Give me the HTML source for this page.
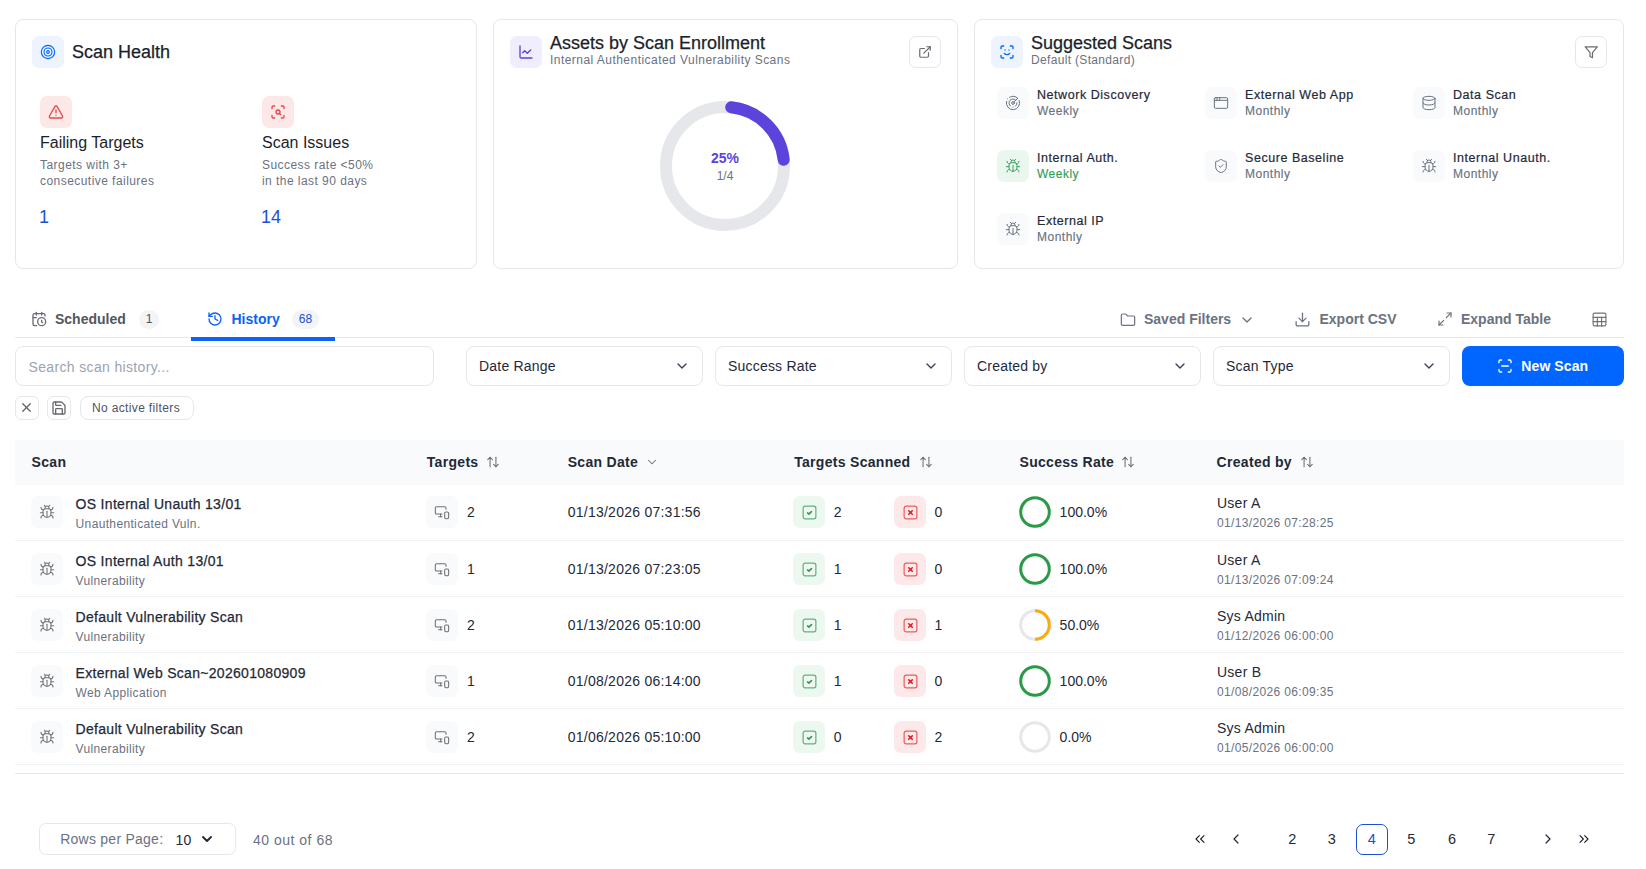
<!DOCTYPE html>
<html><head><meta charset="utf-8">
<style>
*{box-sizing:border-box;margin:0;padding:0}
html,body{width:1646px;height:869px;background:#fff;overflow:hidden}
body{font-family:"Liberation Sans",sans-serif;color:#1f2937;position:relative}
.abs{position:absolute}
svg{display:block}
.ic{fill:none;stroke:currentColor;stroke-width:2;stroke-linecap:round;stroke-linejoin:round}
.card{position:absolute;border:1px solid #e5e7eb;border-radius:8px;background:#fff}
.ibox{position:absolute;width:32px;height:32px;border-radius:7px;display:flex;align-items:center;justify-content:center}
.t18{font-size:18px;color:#1a1f2b;white-space:nowrap;-webkit-text-stroke:.25px currentColor}
.sub12{font-size:12px;color:#6b7280;white-space:nowrap}
.nw{white-space:nowrap}

.sg-n{font-size:12.5px;line-height:13px;color:#1f2937;letter-spacing:.55px;white-space:nowrap;-webkit-text-stroke:.2px currentColor}
.sg-f{font-size:12px;line-height:12px;letter-spacing:.5px;white-space:nowrap;-webkit-text-stroke:.15px currentColor}
.tab{font-size:14px;line-height:14px;font-weight:bold;white-space:nowrap}
.badge{position:absolute;height:19px;border-radius:10px;background:#f3f4f6;font-size:12px;line-height:19px;text-align:center}
.inp{position:absolute;top:346px;height:40px;border:1px solid #e5e7eb;border-radius:8px;background:#fff}
.dd{font-size:14px;line-height:14px;color:#1f2937;letter-spacing:.2px;white-space:nowrap}
.th{font-size:14px;line-height:14px;font-weight:bold;color:#1f2937;letter-spacing:.3px;white-space:nowrap}
.tn{font-size:14px;line-height:14px;color:#1f2937;letter-spacing:.25px;white-space:nowrap}
.ts{font-size:12px;line-height:12px;color:#6b7280;letter-spacing:.35px;white-space:nowrap}
.pg{font-size:14.5px;line-height:15px;color:#1f2937;white-space:nowrap}
</style></head><body>

<!-- Card 1: Scan Health -->
<div class="card" style="left:15px;top:19px;width:462px;height:250px"></div>
<div class="ibox" style="left:32px;top:36px;background:#edf4ff;color:#0066ff">
 <svg class="ic" width="16" height="16" viewBox="0 0 24 24" style="stroke-width:1.7"><circle cx="12" cy="12" r="10"/><circle cx="12" cy="12" r="6"/><circle cx="12" cy="12" r="2"/></svg>
</div>
<div class="abs t18" style="left:72px;top:42px">Scan Health</div>

<div class="ibox" style="left:40px;top:96px;background:#fde8e8;color:#e5484d">
 <svg class="ic" width="16" height="16" viewBox="0 0 24 24"><path d="m21.73 18-8-14a2 2 0 0 0-3.48 0l-8 14A2 2 0 0 0 4 21h16a2 2 0 0 0 1.73-3"/><path d="M12 9v4"/><path d="M12 17h.01"/></svg>
</div>
<div class="abs nw" style="left:40px;top:134px;font-size:16px;color:#1a1f2b">Failing Targets</div>
<div class="abs sub12" style="left:40px;top:157px;line-height:16px;letter-spacing:.45px">Targets with 3+<br>consecutive failures</div>
<div class="abs nw" style="left:39px;top:206.6px;font-size:18px;color:#1d4ed8">1</div>

<div class="ibox" style="left:262px;top:96px;background:#fde8e8;color:#e5484d">
 <svg class="ic" width="16" height="16" viewBox="0 0 24 24"><path d="M3 7V5a2 2 0 0 1 2-2h2"/><path d="M17 3h2a2 2 0 0 1 2 2v2"/><path d="M21 17v2a2 2 0 0 1-2 2h-2"/><path d="M7 21H5a2 2 0 0 1-2-2v-2"/><circle cx="12" cy="12" r="3"/><path d="m16 16-1.9-1.9"/></svg>
</div>
<div class="abs nw" style="left:262px;top:134px;font-size:16px;color:#1a1f2b">Scan Issues</div>
<div class="abs sub12" style="left:262px;top:157px;line-height:16px;letter-spacing:.45px">Success rate &lt;50%<br>in the last 90 days</div>
<div class="abs nw" style="left:261px;top:206.6px;font-size:18px;color:#1d4ed8">14</div>

<!-- Card 2: Assets -->
<div class="card" style="left:493px;top:19px;width:465px;height:250px"></div>
<div class="ibox" style="left:510px;top:36px;background:#f0edfe;color:#5b43dc">
 <svg class="ic" width="16" height="16" viewBox="0 0 24 24"><path d="M3 3v16a2 2 0 0 0 2 2h16"/><path d="m19 9-5 5-4-4-3 3"/></svg>
</div>
<div class="abs t18" style="left:550px;top:33px">Assets by Scan Enrollment</div>
<div class="abs sub12" style="left:550px;top:53px;letter-spacing:.46px">Internal Authenticated Vulnerability Scans</div>
<div class="abs" style="left:909px;top:36px;width:32px;height:32px;border:1px solid #e5e7eb;border-radius:7px;display:flex;align-items:center;justify-content:center;color:#6b6b72">
 <svg class="ic" width="14" height="14" viewBox="0 0 24 24" style="stroke-width:2.1"><path d="M15 3h6v6"/><path d="M10 14 21 3"/><path d="M18 13v6a2 2 0 0 1-2 2H5a2 2 0 0 1-2-2V8a2 2 0 0 1 2-2h6"/></svg>
</div>
<svg class="abs" style="left:660px;top:101px" width="130" height="130" viewBox="0 0 130 130">
 <circle cx="65" cy="65" r="59" fill="none" stroke="#e5e7eb" stroke-width="12"/>
 <path d="M71.2 6.3 A59 59 0 0 1 123.7 58.8" fill="none" stroke="#5b43dc" stroke-width="12" stroke-linecap="round"/>
</svg>
<div class="abs nw" style="left:675px;top:150px;width:100px;text-align:center;font-size:14px;font-weight:bold;color:#5b43dc">25%</div>
<div class="abs nw" style="left:675px;top:169px;width:100px;text-align:center;font-size:12px;color:#6b7280">1/4</div>

<!-- Card 3: Suggested -->
<div class="card" style="left:974px;top:19px;width:650px;height:250px"></div>
<div class="ibox" style="left:991px;top:36px;background:#edf4ff;color:#0066ff">
 <svg class="ic" width="16" height="16" viewBox="0 0 24 24"><path d="M3 7V5a2 2 0 0 1 2-2h2"/><path d="M17 3h2a2 2 0 0 1 2 2v2"/><path d="M21 17v2a2 2 0 0 1-2 2h-2"/><path d="M7 21H5a2 2 0 0 1-2-2v-2"/><path d="M8 14s1.5 2 4 2 4-2 4-2"/><path d="M9 9h.01"/><path d="M15 9h.01"/></svg>
</div>
<div class="abs t18" style="left:1031px;top:33px">Suggested Scans</div>
<div class="abs sub12" style="left:1031px;top:53px;letter-spacing:.33px">Default (Standard)</div>
<div class="abs" style="left:1575px;top:36px;width:32px;height:32px;border:1px solid #e5e7eb;border-radius:7px;display:flex;align-items:center;justify-content:center;color:#6b6b72">
 <svg class="ic" width="14.5" height="14.5" viewBox="0 0 24 24" style="stroke-width:2"><polygon points="22 3 2 3 10 12.46 10 19 14 21 14 12.46 22 3"/></svg>
</div>


<div class="ibox" style="left:997px;top:87px;background:#f8fafc;color:#6b7280"><svg class="ic" width="16" height="16" viewBox="0 0 24 24" style="stroke-width:1.5;"><path d="M19.07 4.93A10 10 0 0 0 6.99 3.34"/><path d="M4 6h.01"/><path d="M2.29 9.62A10 10 0 1 0 21.31 8.35"/><path d="M16.24 7.76A6 6 0 1 0 8.23 16.67"/><path d="M12 18h.01"/><path d="M17.99 11.66A6 6 0 0 1 15.77 16.67"/><circle cx="12" cy="12" r="2"/><path d="m13.41 10.59 5.66-5.66"/></svg></div>
<div class="abs sg-n" style="left:1037px;top:89px;">Network Discovery</div>
<div class="abs sg-f" style="left:1037px;top:105px;color:#6b7280">Weekly</div>
<div class="ibox" style="left:1205px;top:87px;background:#f8fafc;color:#6b7280"><svg class="ic" width="16" height="16" viewBox="0 0 24 24" style="stroke-width:1.5;"><rect x="2" y="4" width="20" height="16" rx="2"/><path d="M10 4v4"/><path d="M2 8h20"/><path d="M6 4v4"/></svg></div>
<div class="abs sg-n" style="left:1245px;top:89px;">External Web App</div>
<div class="abs sg-f" style="left:1245px;top:105px;color:#6b7280">Monthly</div>
<div class="ibox" style="left:1413px;top:87px;background:#f8fafc;color:#6b7280"><svg class="ic" width="16" height="16" viewBox="0 0 24 24" style="stroke-width:1.5;"><ellipse cx="12" cy="5" rx="9" ry="3"/><path d="M3 5V19A9 3 0 0 0 21 19V5"/><path d="M3 12A9 3 0 0 0 21 12"/></svg></div>
<div class="abs sg-n" style="left:1453px;top:89px;">Data Scan</div>
<div class="abs sg-f" style="left:1453px;top:105px;color:#6b7280">Monthly</div>
<div class="ibox" style="left:997px;top:150px;background:#eaf7ee;color:#3aa05a"><svg class="ic" width="16" height="16" viewBox="0 0 24 24" style="stroke-width:1.5;"><path d="m8 2 1.88 1.88"/><path d="M14.12 3.88 16 2"/><path d="M9 7.13v-1a3.003 3.003 0 1 1 6 0v1"/><path d="M12 20c-3.3 0-6-2.7-6-6v-3a4 4 0 0 1 4-4h4a4 4 0 0 1 4 4v3c0 3.3-2.7 6-6 6"/><path d="M12 20v-9"/><path d="M6.53 9C4.6 8.8 3 7.1 3 5"/><path d="M6 13H2"/><path d="M3 21c0-2.1 1.7-3.9 3.8-4"/><path d="M20.97 5c0 2.1-1.6 3.8-3.5 4"/><path d="M22 13h-4"/><path d="M17.2 17c2.1.1 3.8 1.9 3.8 4"/></svg></div>
<div class="abs sg-n" style="left:1037px;top:152px;">Internal Auth.</div>
<div class="abs sg-f" style="left:1037px;top:168px;color:#2f9e55">Weekly</div>
<div class="ibox" style="left:1205px;top:150px;background:#f8fafc;color:#6b7280"><svg class="ic" width="16" height="16" viewBox="0 0 24 24" style="stroke-width:1.5;"><path d="M20 13c0 5-3.5 7.5-7.66 8.95a1 1 0 0 1-.67-.01C7.5 20.5 4 18 4 13V6a1 1 0 0 1 1-1c2 0 4.5-1.2 6.24-2.72a1.17 1.17 0 0 1 1.52 0C14.51 3.81 17 5 19 5a1 1 0 0 1 1 1z"/><path d="m9 12 2 2 4-4"/></svg></div>
<div class="abs sg-n" style="left:1245px;top:152px;">Secure Baseline</div>
<div class="abs sg-f" style="left:1245px;top:168px;color:#6b7280">Monthly</div>
<div class="ibox" style="left:1413px;top:150px;background:#f8fafc;color:#6b7280"><svg class="ic" width="16" height="16" viewBox="0 0 24 24" style="stroke-width:1.5;"><path d="m8 2 1.88 1.88"/><path d="M14.12 3.88 16 2"/><path d="M9 7.13v-1a3.003 3.003 0 1 1 6 0v1"/><path d="M12 20c-3.3 0-6-2.7-6-6v-3a4 4 0 0 1 4-4h4a4 4 0 0 1 4 4v3c0 3.3-2.7 6-6 6"/><path d="M12 20v-9"/><path d="M6.53 9C4.6 8.8 3 7.1 3 5"/><path d="M6 13H2"/><path d="M3 21c0-2.1 1.7-3.9 3.8-4"/><path d="M20.97 5c0 2.1-1.6 3.8-3.5 4"/><path d="M22 13h-4"/><path d="M17.2 17c2.1.1 3.8 1.9 3.8 4"/></svg></div>
<div class="abs sg-n" style="left:1453px;top:152px;">Internal Unauth.</div>
<div class="abs sg-f" style="left:1453px;top:168px;color:#6b7280">Monthly</div>
<div class="ibox" style="left:997px;top:213px;background:#f8fafc;color:#6b7280"><svg class="ic" width="16" height="16" viewBox="0 0 24 24" style="stroke-width:1.5;"><path d="m8 2 1.88 1.88"/><path d="M14.12 3.88 16 2"/><path d="M9 7.13v-1a3.003 3.003 0 1 1 6 0v1"/><path d="M12 20c-3.3 0-6-2.7-6-6v-3a4 4 0 0 1 4-4h4a4 4 0 0 1 4 4v3c0 3.3-2.7 6-6 6"/><path d="M12 20v-9"/><path d="M6.53 9C4.6 8.8 3 7.1 3 5"/><path d="M6 13H2"/><path d="M3 21c0-2.1 1.7-3.9 3.8-4"/><path d="M20.97 5c0 2.1-1.6 3.8-3.5 4"/><path d="M22 13h-4"/><path d="M17.2 17c2.1.1 3.8 1.9 3.8 4"/></svg></div>
<div class="abs sg-n" style="left:1037px;top:215px;">External IP</div>
<div class="abs sg-f" style="left:1037px;top:231px;color:#6b7280">Monthly</div>
<div class="abs" style="left:30.7px;top:310.6px;color:#6b6e75"><svg class="ic" width="16" height="16" viewBox="0 0 24 24" style="stroke-width:2;"><path d="M21 7.5V6a2 2 0 0 0-2-2H5a2 2 0 0 0-2 2v14a2 2 0 0 0 2 2h3.5"/><path d="M16 2v4"/><path d="M8 2v4"/><path d="M3 10h5"/><path d="M17.5 17.5 16 16.3V14"/><circle cx="16" cy="16" r="6"/></svg></div>
<div class="abs tab" style="left:55px;top:311.6px;color:#52565e">Scheduled</div>
<div class="badge" style="left:139px;top:309.5px;width:20px;color:#4b5563">1</div>
<div class="abs" style="left:206.6px;top:311px;color:#0b63f6"><svg class="ic" width="16" height="16" viewBox="0 0 24 24" style="stroke-width:2;"><path d="M3 12a9 9 0 1 0 9-9 9.75 9.75 0 0 0-6.74 2.74L3 8"/><path d="M3 3v5h5"/><path d="M12 7v5l4 2"/></svg></div>
<div class="abs tab" style="left:231.5px;top:311.6px;color:#0b63f6">History</div>
<div class="badge" style="left:292px;top:309.5px;width:27px;color:#1d4ed8">68</div>
<div class="abs" style="left:15px;top:337px;width:1609px;height:1px;background:#e5e7eb"></div>
<div class="abs" style="left:191px;top:337px;width:144px;height:4px;background:#0b63f6"></div>
<div class="abs" style="left:1120px;top:312px;color:#6b7280"><svg class="ic" width="16" height="16" viewBox="0 0 24 24" style="stroke-width:1.8;"><path d="M20 20a2 2 0 0 0 2-2V8a2 2 0 0 0-2-2h-7.9a2 2 0 0 1-1.69-.9L9.6 3.9A2 2 0 0 0 7.93 3H4a2 2 0 0 0-2 2v13a2 2 0 0 0 2 2Z"/></svg></div>
<div class="abs tab" style="left:1144px;top:311.6px;color:#6b7280">Saved Filters</div>
<div class="abs" style="left:1239px;top:312px;color:#6b7280"><svg class="ic" width="16" height="16" viewBox="0 0 24 24" style="stroke-width:2;"><path d="m6 9 6 6 6-6"/></svg></div>
<div class="abs" style="left:1294px;top:311px;color:#6b7280"><svg class="ic" width="17" height="17" viewBox="0 0 24 24" style="stroke-width:1.8;"><path d="M21 15v4a2 2 0 0 1-2 2H5a2 2 0 0 1-2-2v-4"/><polyline points="7 10 12 15 17 10"/><line x1="12" x2="12" y1="15" y2="3"/></svg></div>
<div class="abs tab" style="left:1319.5px;top:311.6px;color:#6b7280">Export CSV</div>
<div class="abs" style="left:1437px;top:311px;color:#6b7280"><svg class="ic" width="16" height="16" viewBox="0 0 24 24" style="stroke-width:1.8;"><polyline points="15 3 21 3 21 9"/><polyline points="9 21 3 21 3 15"/><line x1="21" x2="14" y1="3" y2="10"/><line x1="3" x2="10" y1="21" y2="14"/></svg></div>
<div class="abs tab" style="left:1461px;top:311.6px;color:#6b7280">Expand Table</div>
<div class="abs" style="left:1591px;top:311px;color:#6b7280"><svg class="ic" width="17" height="17" viewBox="0 0 24 24" style="stroke-width:1.6;"><rect width="18" height="18" x="3" y="3" rx="2"/><path d="M3 9h18"/><path d="M3 15h18"/><path d="M9 9v12"/><path d="M15 9v12"/></svg></div>
<div class="inp" style="left:15px;width:419px"></div>
<div class="abs dd" style="left:28.5px;top:360px;color:#9ca3af;letter-spacing:.35px">Search scan history...</div>
<div class="inp" style="left:466px;width:237px"></div>
<div class="abs dd" style="left:479px;top:359.3px;">Date Range</div>
<div class="abs" style="left:673.5px;top:358px;color:#374151"><svg class="ic" width="16" height="16" viewBox="0 0 24 24" style="stroke-width:2;"><path d="m6 9 6 6 6-6"/></svg></div>
<div class="inp" style="left:715px;width:237px"></div>
<div class="abs dd" style="left:728px;top:359.3px;">Success Rate</div>
<div class="abs" style="left:922.5px;top:358px;color:#374151"><svg class="ic" width="16" height="16" viewBox="0 0 24 24" style="stroke-width:2;"><path d="m6 9 6 6 6-6"/></svg></div>
<div class="inp" style="left:964px;width:237px"></div>
<div class="abs dd" style="left:977px;top:359.3px;">Created by</div>
<div class="abs" style="left:1171.5px;top:358px;color:#374151"><svg class="ic" width="16" height="16" viewBox="0 0 24 24" style="stroke-width:2;"><path d="m6 9 6 6 6-6"/></svg></div>
<div class="inp" style="left:1213px;width:237px"></div>
<div class="abs dd" style="left:1226px;top:359.3px;">Scan Type</div>
<div class="abs" style="left:1420.5px;top:358px;color:#374151"><svg class="ic" width="16" height="16" viewBox="0 0 24 24" style="stroke-width:2;"><path d="m6 9 6 6 6-6"/></svg></div>
<div class="abs" style="left:1462px;top:346px;width:162px;height:40px;border-radius:8px;background:#0066ff"></div>
<div class="abs" style="left:1497px;top:358px;color:#fff"><svg class="ic" width="16" height="16" viewBox="0 0 24 24" style="stroke-width:2;"><path d="M3 7V5a2 2 0 0 1 2-2h2"/><path d="M17 3h2a2 2 0 0 1 2 2v2"/><path d="M21 17v2a2 2 0 0 1-2 2h-2"/><path d="M7 21H5a2 2 0 0 1-2-2v-2"/><path d="M7 12h10"/></svg></div>
<div class="abs tab" style="left:1521.3px;top:358.9px;color:#fff;letter-spacing:.1px">New Scan</div>
<div class="abs" style="left:15px;top:396px;width:24px;height:24px;border:1px solid #e5e7eb;border-radius:6px"></div>
<div class="abs" style="left:19.1px;top:399.7px;color:#5f6168"><svg class="ic" width="15" height="15" viewBox="0 0 24 24" style="stroke-width:2;"><path d="M18 6 6 18"/><path d="m6 6 12 12"/></svg></div>
<div class="abs" style="left:47px;top:396px;width:24px;height:24px;border:1px solid #e5e7eb;border-radius:6px"></div>
<div class="abs" style="left:51px;top:400px;color:#686a70"><svg class="ic" width="16" height="16" viewBox="0 0 24 24" style="stroke-width:2;"><path d="M15.2 3a2 2 0 0 1 1.4.6l3.8 3.8a2 2 0 0 1 .6 1.4V19a2 2 0 0 1-2 2H5a2 2 0 0 1-2-2V5a2 2 0 0 1 2-2z"/><path d="M17 21v-7a1 1 0 0 0-1-1H8a1 1 0 0 0-1 1v7"/><path d="M7 3v4a1 1 0 0 0 1 1h7"/></svg></div>
<div class="abs" style="left:80px;top:396px;width:114px;height:24px;border:1px solid #e5e7eb;border-radius:8px"></div>
<div class="abs ts" style="left:92px;top:401.7px;color:#4b5563;letter-spacing:.35px">No active filters</div>
<div class="abs" style="left:15px;top:440px;width:1609px;height:45px;background:#f9fafb"></div>
<div class="abs th" style="left:31.6px;top:455.4px;">Scan</div>
<div class="abs th" style="left:426.8px;top:455.4px;">Targets</div>
<div class="abs" style="left:486px;top:455px;color:#6e6e73"><svg class="ic" width="14" height="14" viewBox="0 0 24 24" style="stroke-width:1.8;"><path d="m21 16-4 4-4-4"/><path d="M17 20V4"/><path d="m3 8 4-4 4 4"/><path d="M7 4v16"/></svg></div>
<div class="abs th" style="left:567.7px;top:455.4px;">Scan Date</div>
<div class="abs" style="left:645px;top:455px;color:#6e6e73"><svg class="ic" width="14" height="14" viewBox="0 0 24 24" style="stroke-width:1.8;"><path d="m6 9 6 6 6-6"/></svg></div>
<div class="abs th" style="left:794.2px;top:455.4px;">Targets Scanned</div>
<div class="abs" style="left:919px;top:455px;color:#6e6e73"><svg class="ic" width="14" height="14" viewBox="0 0 24 24" style="stroke-width:1.8;"><path d="m21 16-4 4-4-4"/><path d="M17 20V4"/><path d="m3 8 4-4 4 4"/><path d="M7 4v16"/></svg></div>
<div class="abs th" style="left:1019.5px;top:455.4px;">Success Rate</div>
<div class="abs" style="left:1121px;top:455px;color:#6e6e73"><svg class="ic" width="14" height="14" viewBox="0 0 24 24" style="stroke-width:1.8;"><path d="m21 16-4 4-4-4"/><path d="M17 20V4"/><path d="m3 8 4-4 4 4"/><path d="M7 4v16"/></svg></div>
<div class="abs th" style="left:1216.6px;top:455.4px;">Created by</div>
<div class="abs" style="left:1300px;top:455px;color:#6e6e73"><svg class="ic" width="14" height="14" viewBox="0 0 24 24" style="stroke-width:1.8;"><path d="m21 16-4 4-4-4"/><path d="M17 20V4"/><path d="m3 8 4-4 4 4"/><path d="M7 4v16"/></svg></div>
<div class="abs" style="left:15px;top:540px;width:1609px;height:1px;background:#f1f2f4"></div>
<div class="ibox" style="left:31px;top:496px;background:#f8fafc;color:#747474"><svg class="ic" width="16" height="16" viewBox="0 0 24 24" style="stroke-width:1.6;"><path d="m8 2 1.88 1.88"/><path d="M14.12 3.88 16 2"/><path d="M9 7.13v-1a3.003 3.003 0 1 1 6 0v1"/><path d="M12 20c-3.3 0-6-2.7-6-6v-3a4 4 0 0 1 4-4h4a4 4 0 0 1 4 4v3c0 3.3-2.7 6-6 6"/><path d="M12 20v-9"/><path d="M6.53 9C4.6 8.8 3 7.1 3 5"/><path d="M6 13H2"/><path d="M3 21c0-2.1 1.7-3.9 3.8-4"/><path d="M20.97 5c0 2.1-1.6 3.8-3.5 4"/><path d="M22 13h-4"/><path d="M17.2 17c2.1.1 3.8 1.9 3.8 4"/></svg></div>
<div class="abs tn" style="left:75.6px;top:496.5px;-webkit-text-stroke:.25px currentColor;letter-spacing:.3px">OS Internal Unauth 13/01</div>
<div class="abs ts" style="left:75.6px;top:517.8px;">Unauthenticated Vuln.</div>
<div class="ibox" style="left:426px;top:496px;background:#f8fafc;color:#707070"><svg class="ic" width="16" height="16" viewBox="0 0 24 24" style="stroke-width:1.6;"><path d="M18 8V6a2 2 0 0 0-2-2H4a2 2 0 0 0-2 2v7a2 2 0 0 0 2 2h8"/><path d="M10 19v-3.96 3.15"/><path d="M7 19h5"/><rect width="6" height="10" x="16" y="12" rx="2"/></svg></div>
<div class="abs tn" style="left:467px;top:505.2px;">2</div>
<div class="abs tn" style="left:567.7px;top:505.2px;">01/13/2026 07:31:56</div>
<div class="ibox" style="left:793px;top:496px;background:#edf8f0"><svg class="ic" width="17" height="17" viewBox="0 0 24 24" style="stroke-width:2;"><rect x="3" y="3" width="18" height="18" rx="3" stroke="#5fb37a" stroke-width="1.7"/><path d="m9.3 12.6 1.8 1.7 3.7-3.6" stroke="#2e9a4b" stroke-width="2.2"/></svg></div>
<div class="abs tn" style="left:833.8px;top:505.2px;">2</div>
<div class="ibox" style="left:894px;top:496px;background:#fde9e9"><svg class="ic" width="17" height="17" viewBox="0 0 24 24" style="stroke-width:2;"><rect x="3" y="3" width="18" height="18" rx="3" stroke="#ef5b5b" stroke-width="1.7"/><path d="m14.45 9.55-4.9 4.9" stroke="#e0161d" stroke-width="2.2"/><path d="m9.55 9.55 4.9 4.9" stroke="#e0161d" stroke-width="2.2"/></svg></div>
<div class="abs tn" style="left:934.5px;top:505.2px;">0</div>
<svg class="abs" style="left:1019px;top:495.5px" width="32" height="32" viewBox="0 0 32 32"><circle cx="16" cy="16" r="14.3" fill="none" stroke="#2a9a48" stroke-width="3"/></svg>
<div class="abs tn" style="left:1059.6px;top:505.2px;letter-spacing:0">100.0%</div>
<div class="abs tn" style="left:1217px;top:496.2px;">User A</div>
<div class="abs ts" style="left:1217px;top:517px;">01/13/2026 07:28:25</div>
<div class="abs" style="left:15px;top:596px;width:1609px;height:1px;background:#f1f2f4"></div>
<div class="ibox" style="left:31px;top:553px;background:#f8fafc;color:#747474"><svg class="ic" width="16" height="16" viewBox="0 0 24 24" style="stroke-width:1.6;"><path d="m8 2 1.88 1.88"/><path d="M14.12 3.88 16 2"/><path d="M9 7.13v-1a3.003 3.003 0 1 1 6 0v1"/><path d="M12 20c-3.3 0-6-2.7-6-6v-3a4 4 0 0 1 4-4h4a4 4 0 0 1 4 4v3c0 3.3-2.7 6-6 6"/><path d="M12 20v-9"/><path d="M6.53 9C4.6 8.8 3 7.1 3 5"/><path d="M6 13H2"/><path d="M3 21c0-2.1 1.7-3.9 3.8-4"/><path d="M20.97 5c0 2.1-1.6 3.8-3.5 4"/><path d="M22 13h-4"/><path d="M17.2 17c2.1.1 3.8 1.9 3.8 4"/></svg></div>
<div class="abs tn" style="left:75.6px;top:553.5px;-webkit-text-stroke:.25px currentColor;letter-spacing:.3px">OS Internal Auth 13/01</div>
<div class="abs ts" style="left:75.6px;top:574.8px;">Vulnerability</div>
<div class="ibox" style="left:426px;top:553px;background:#f8fafc;color:#707070"><svg class="ic" width="16" height="16" viewBox="0 0 24 24" style="stroke-width:1.6;"><path d="M18 8V6a2 2 0 0 0-2-2H4a2 2 0 0 0-2 2v7a2 2 0 0 0 2 2h8"/><path d="M10 19v-3.96 3.15"/><path d="M7 19h5"/><rect width="6" height="10" x="16" y="12" rx="2"/></svg></div>
<div class="abs tn" style="left:467px;top:562.2px;">1</div>
<div class="abs tn" style="left:567.7px;top:562.2px;">01/13/2026 07:23:05</div>
<div class="ibox" style="left:793px;top:553px;background:#edf8f0"><svg class="ic" width="17" height="17" viewBox="0 0 24 24" style="stroke-width:2;"><rect x="3" y="3" width="18" height="18" rx="3" stroke="#5fb37a" stroke-width="1.7"/><path d="m9.3 12.6 1.8 1.7 3.7-3.6" stroke="#2e9a4b" stroke-width="2.2"/></svg></div>
<div class="abs tn" style="left:833.8px;top:562.2px;">1</div>
<div class="ibox" style="left:894px;top:553px;background:#fde9e9"><svg class="ic" width="17" height="17" viewBox="0 0 24 24" style="stroke-width:2;"><rect x="3" y="3" width="18" height="18" rx="3" stroke="#ef5b5b" stroke-width="1.7"/><path d="m14.45 9.55-4.9 4.9" stroke="#e0161d" stroke-width="2.2"/><path d="m9.55 9.55 4.9 4.9" stroke="#e0161d" stroke-width="2.2"/></svg></div>
<div class="abs tn" style="left:934.5px;top:562.2px;">0</div>
<svg class="abs" style="left:1019px;top:552.5px" width="32" height="32" viewBox="0 0 32 32"><circle cx="16" cy="16" r="14.3" fill="none" stroke="#2a9a48" stroke-width="3"/></svg>
<div class="abs tn" style="left:1059.6px;top:562.2px;letter-spacing:0">100.0%</div>
<div class="abs tn" style="left:1217px;top:553.2px;">User A</div>
<div class="abs ts" style="left:1217px;top:574px;">01/13/2026 07:09:24</div>
<div class="abs" style="left:15px;top:652px;width:1609px;height:1px;background:#f1f2f4"></div>
<div class="ibox" style="left:31px;top:609px;background:#f8fafc;color:#747474"><svg class="ic" width="16" height="16" viewBox="0 0 24 24" style="stroke-width:1.6;"><path d="m8 2 1.88 1.88"/><path d="M14.12 3.88 16 2"/><path d="M9 7.13v-1a3.003 3.003 0 1 1 6 0v1"/><path d="M12 20c-3.3 0-6-2.7-6-6v-3a4 4 0 0 1 4-4h4a4 4 0 0 1 4 4v3c0 3.3-2.7 6-6 6"/><path d="M12 20v-9"/><path d="M6.53 9C4.6 8.8 3 7.1 3 5"/><path d="M6 13H2"/><path d="M3 21c0-2.1 1.7-3.9 3.8-4"/><path d="M20.97 5c0 2.1-1.6 3.8-3.5 4"/><path d="M22 13h-4"/><path d="M17.2 17c2.1.1 3.8 1.9 3.8 4"/></svg></div>
<div class="abs tn" style="left:75.6px;top:609.5px;-webkit-text-stroke:.25px currentColor;letter-spacing:.3px">Default Vulnerability Scan</div>
<div class="abs ts" style="left:75.6px;top:630.8px;">Vulnerability</div>
<div class="ibox" style="left:426px;top:609px;background:#f8fafc;color:#707070"><svg class="ic" width="16" height="16" viewBox="0 0 24 24" style="stroke-width:1.6;"><path d="M18 8V6a2 2 0 0 0-2-2H4a2 2 0 0 0-2 2v7a2 2 0 0 0 2 2h8"/><path d="M10 19v-3.96 3.15"/><path d="M7 19h5"/><rect width="6" height="10" x="16" y="12" rx="2"/></svg></div>
<div class="abs tn" style="left:467px;top:618.2px;">2</div>
<div class="abs tn" style="left:567.7px;top:618.2px;">01/13/2026 05:10:00</div>
<div class="ibox" style="left:793px;top:609px;background:#edf8f0"><svg class="ic" width="17" height="17" viewBox="0 0 24 24" style="stroke-width:2;"><rect x="3" y="3" width="18" height="18" rx="3" stroke="#5fb37a" stroke-width="1.7"/><path d="m9.3 12.6 1.8 1.7 3.7-3.6" stroke="#2e9a4b" stroke-width="2.2"/></svg></div>
<div class="abs tn" style="left:833.8px;top:618.2px;">1</div>
<div class="ibox" style="left:894px;top:609px;background:#fde9e9"><svg class="ic" width="17" height="17" viewBox="0 0 24 24" style="stroke-width:2;"><rect x="3" y="3" width="18" height="18" rx="3" stroke="#ef5b5b" stroke-width="1.7"/><path d="m14.45 9.55-4.9 4.9" stroke="#e0161d" stroke-width="2.2"/><path d="m9.55 9.55 4.9 4.9" stroke="#e0161d" stroke-width="2.2"/></svg></div>
<div class="abs tn" style="left:934.5px;top:618.2px;">1</div>
<svg class="abs" style="left:1019px;top:608.5px" width="32" height="32" viewBox="0 0 32 32"><circle cx="16" cy="16" r="14.3" fill="none" stroke="#e5e7eb" stroke-width="3"/><path d="M16 1.6999999999999993 A14.3 14.3 0 0 1 16 30.3" fill="none" stroke="#fcab0a" stroke-width="3"/></svg>
<div class="abs tn" style="left:1059.6px;top:618.2px;letter-spacing:0">50.0%</div>
<div class="abs tn" style="left:1217px;top:609.2px;">Sys Admin</div>
<div class="abs ts" style="left:1217px;top:630px;">01/12/2026 06:00:00</div>
<div class="abs" style="left:15px;top:708px;width:1609px;height:1px;background:#f1f2f4"></div>
<div class="ibox" style="left:31px;top:665px;background:#f8fafc;color:#747474"><svg class="ic" width="16" height="16" viewBox="0 0 24 24" style="stroke-width:1.6;"><path d="m8 2 1.88 1.88"/><path d="M14.12 3.88 16 2"/><path d="M9 7.13v-1a3.003 3.003 0 1 1 6 0v1"/><path d="M12 20c-3.3 0-6-2.7-6-6v-3a4 4 0 0 1 4-4h4a4 4 0 0 1 4 4v3c0 3.3-2.7 6-6 6"/><path d="M12 20v-9"/><path d="M6.53 9C4.6 8.8 3 7.1 3 5"/><path d="M6 13H2"/><path d="M3 21c0-2.1 1.7-3.9 3.8-4"/><path d="M20.97 5c0 2.1-1.6 3.8-3.5 4"/><path d="M22 13h-4"/><path d="M17.2 17c2.1.1 3.8 1.9 3.8 4"/></svg></div>
<div class="abs tn" style="left:75.6px;top:665.5px;-webkit-text-stroke:.25px currentColor;letter-spacing:.3px">External Web Scan~202601080909</div>
<div class="abs ts" style="left:75.6px;top:686.8px;">Web Application</div>
<div class="ibox" style="left:426px;top:665px;background:#f8fafc;color:#707070"><svg class="ic" width="16" height="16" viewBox="0 0 24 24" style="stroke-width:1.6;"><path d="M18 8V6a2 2 0 0 0-2-2H4a2 2 0 0 0-2 2v7a2 2 0 0 0 2 2h8"/><path d="M10 19v-3.96 3.15"/><path d="M7 19h5"/><rect width="6" height="10" x="16" y="12" rx="2"/></svg></div>
<div class="abs tn" style="left:467px;top:674.2px;">1</div>
<div class="abs tn" style="left:567.7px;top:674.2px;">01/08/2026 06:14:00</div>
<div class="ibox" style="left:793px;top:665px;background:#edf8f0"><svg class="ic" width="17" height="17" viewBox="0 0 24 24" style="stroke-width:2;"><rect x="3" y="3" width="18" height="18" rx="3" stroke="#5fb37a" stroke-width="1.7"/><path d="m9.3 12.6 1.8 1.7 3.7-3.6" stroke="#2e9a4b" stroke-width="2.2"/></svg></div>
<div class="abs tn" style="left:833.8px;top:674.2px;">1</div>
<div class="ibox" style="left:894px;top:665px;background:#fde9e9"><svg class="ic" width="17" height="17" viewBox="0 0 24 24" style="stroke-width:2;"><rect x="3" y="3" width="18" height="18" rx="3" stroke="#ef5b5b" stroke-width="1.7"/><path d="m14.45 9.55-4.9 4.9" stroke="#e0161d" stroke-width="2.2"/><path d="m9.55 9.55 4.9 4.9" stroke="#e0161d" stroke-width="2.2"/></svg></div>
<div class="abs tn" style="left:934.5px;top:674.2px;">0</div>
<svg class="abs" style="left:1019px;top:664.5px" width="32" height="32" viewBox="0 0 32 32"><circle cx="16" cy="16" r="14.3" fill="none" stroke="#2a9a48" stroke-width="3"/></svg>
<div class="abs tn" style="left:1059.6px;top:674.2px;letter-spacing:0">100.0%</div>
<div class="abs tn" style="left:1217px;top:665.2px;">User B</div>
<div class="abs ts" style="left:1217px;top:686px;">01/08/2026 06:09:35</div>
<div class="abs" style="left:15px;top:764px;width:1609px;height:1px;background:#f1f2f4"></div>
<div class="ibox" style="left:31px;top:721px;background:#f8fafc;color:#747474"><svg class="ic" width="16" height="16" viewBox="0 0 24 24" style="stroke-width:1.6;"><path d="m8 2 1.88 1.88"/><path d="M14.12 3.88 16 2"/><path d="M9 7.13v-1a3.003 3.003 0 1 1 6 0v1"/><path d="M12 20c-3.3 0-6-2.7-6-6v-3a4 4 0 0 1 4-4h4a4 4 0 0 1 4 4v3c0 3.3-2.7 6-6 6"/><path d="M12 20v-9"/><path d="M6.53 9C4.6 8.8 3 7.1 3 5"/><path d="M6 13H2"/><path d="M3 21c0-2.1 1.7-3.9 3.8-4"/><path d="M20.97 5c0 2.1-1.6 3.8-3.5 4"/><path d="M22 13h-4"/><path d="M17.2 17c2.1.1 3.8 1.9 3.8 4"/></svg></div>
<div class="abs tn" style="left:75.6px;top:721.5px;-webkit-text-stroke:.25px currentColor;letter-spacing:.3px">Default Vulnerability Scan</div>
<div class="abs ts" style="left:75.6px;top:742.8px;">Vulnerability</div>
<div class="ibox" style="left:426px;top:721px;background:#f8fafc;color:#707070"><svg class="ic" width="16" height="16" viewBox="0 0 24 24" style="stroke-width:1.6;"><path d="M18 8V6a2 2 0 0 0-2-2H4a2 2 0 0 0-2 2v7a2 2 0 0 0 2 2h8"/><path d="M10 19v-3.96 3.15"/><path d="M7 19h5"/><rect width="6" height="10" x="16" y="12" rx="2"/></svg></div>
<div class="abs tn" style="left:467px;top:730.2px;">2</div>
<div class="abs tn" style="left:567.7px;top:730.2px;">01/06/2026 05:10:00</div>
<div class="ibox" style="left:793px;top:721px;background:#edf8f0"><svg class="ic" width="17" height="17" viewBox="0 0 24 24" style="stroke-width:2;"><rect x="3" y="3" width="18" height="18" rx="3" stroke="#5fb37a" stroke-width="1.7"/><path d="m9.3 12.6 1.8 1.7 3.7-3.6" stroke="#2e9a4b" stroke-width="2.2"/></svg></div>
<div class="abs tn" style="left:833.8px;top:730.2px;">0</div>
<div class="ibox" style="left:894px;top:721px;background:#fde9e9"><svg class="ic" width="17" height="17" viewBox="0 0 24 24" style="stroke-width:2;"><rect x="3" y="3" width="18" height="18" rx="3" stroke="#ef5b5b" stroke-width="1.7"/><path d="m14.45 9.55-4.9 4.9" stroke="#e0161d" stroke-width="2.2"/><path d="m9.55 9.55 4.9 4.9" stroke="#e0161d" stroke-width="2.2"/></svg></div>
<div class="abs tn" style="left:934.5px;top:730.2px;">2</div>
<svg class="abs" style="left:1019px;top:720.5px" width="32" height="32" viewBox="0 0 32 32"><circle cx="16" cy="16" r="14.3" fill="none" stroke="#e5e7eb" stroke-width="3"/></svg>
<div class="abs tn" style="left:1059.6px;top:730.2px;letter-spacing:0">0.0%</div>
<div class="abs tn" style="left:1217px;top:721.2px;">Sys Admin</div>
<div class="abs ts" style="left:1217px;top:742px;">01/05/2026 06:00:00</div>
<div class="abs" style="left:15px;top:773px;width:1609px;height:1px;background:#e5e7eb"></div>
<div class="abs" style="left:39px;top:823px;width:197px;height:32px;border:1px solid #e5e7eb;border-radius:7px"></div>
<div class="abs tn" style="left:60.2px;top:832.1px;color:#6b7280;letter-spacing:.25px">Rows per Page:</div>
<div class="abs tn" style="left:175.4px;top:833px;">10</div>
<div class="abs" style="left:199px;top:831px;color:#1f2937"><svg class="ic" width="16" height="16" viewBox="0 0 24 24" style="stroke-width:2.9;"><path d="m6 9 6 6 6-6"/></svg></div>
<div class="abs tn" style="left:253px;top:832.8px;color:#6b7280;letter-spacing:.5px">40 out of 68</div>
<div class="abs" style="left:1192px;top:831px;color:#1f2937"><svg class="ic" width="16" height="16" viewBox="0 0 24 24" style="stroke-width:1.8;"><path d="m11 17-5-5 5-5"/><path d="m18 17-5-5 5-5"/></svg></div>
<div class="abs" style="left:1228px;top:831px;color:#1f2937"><svg class="ic" width="16" height="16" viewBox="0 0 24 24" style="stroke-width:1.8;"><path d="m15 18-6-6 6-6"/></svg></div>
<div class="abs pg" style="left:1276.3px;top:832px;width:32px;text-align:center;color:#1f2937">2</div>
<div class="abs pg" style="left:1315.9px;top:832px;width:32px;text-align:center;color:#1f2937">3</div>
<div class="abs pg" style="left:1355.8px;top:832px;width:32px;text-align:center;color:#1d4ed8">4</div>
<div class="abs pg" style="left:1395.4px;top:832px;width:32px;text-align:center;color:#1f2937">5</div>
<div class="abs pg" style="left:1436.1px;top:832px;width:32px;text-align:center;color:#1f2937">6</div>
<div class="abs pg" style="left:1475.3px;top:832px;width:32px;text-align:center;color:#1f2937">7</div>
<div class="abs" style="left:1356px;top:823.5px;width:32px;height:31.5px;border:1.3px solid #1d4ed8;border-radius:7px"></div>
<div class="abs" style="left:1540px;top:831px;color:#1f2937"><svg class="ic" width="16" height="16" viewBox="0 0 24 24" style="stroke-width:1.8;"><path d="m9 18 6-6-6-6"/></svg></div>
<div class="abs" style="left:1576px;top:831px;color:#1f2937"><svg class="ic" width="16" height="16" viewBox="0 0 24 24" style="stroke-width:1.8;"><path d="m6 17 5-5-5-5"/><path d="m13 17 5-5-5-5"/></svg></div>
</body></html>
